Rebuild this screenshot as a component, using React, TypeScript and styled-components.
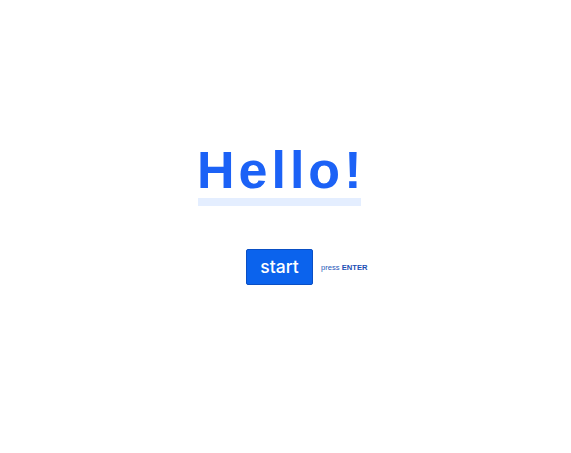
import styled, { createGlobalStyle } from "styled-components";

const GlobalStyle = createGlobalStyle`
  html, body {
    margin: 0;
    padding: 0;
    background: #ffffff;
    font-family: "Liberation Sans", Arial, sans-serif;
  }
`;

const Page = styled.div`
  width: 571px;
  height: 453px;
  padding: 138px 0 0 198px;
  box-sizing: border-box;
`;

const Greeting = styled.div`
  display: inline-flex;
  flex-direction: column;
  align-items: flex-start;
`;

const Title = styled.h1`
  margin: 0 0 0 -1px;
  font-size: 52px;
  line-height: 64px;
  font-weight: 700;
  letter-spacing: 4px;
  color: #1c62f6;
`;

const Underline = styled.div`
  height: 8px;
  width: 163px;
  margin-top: -4px;
  background: #e4eeff;
`;

const Actions = styled.div`
  display: flex;
  align-items: center;
  gap: 8px;
  margin: 43px 0 0 48px;
`;

const StartButton = styled.button`
  width: 67px;
  height: 36px;
  padding: 0 0 2px;
  border: 1px solid #0a4fc4;
  border-radius: 2px;
  background: #0b63ed;
  color: #ffffff;
  font-family: Inter, "Liberation Sans", sans-serif;
  font-weight: 500;
  font-size: 17.5px;
  cursor: pointer;
`;

const Hint = styled.span`
  font-size: 7.6px;
  color: #2456b8;

  b {
    font-weight: 700;
    color: #1b4fb4;
  }
`;

export default function App() {
  return (
    <>
      <GlobalStyle />
      <Page>
        <Greeting>
          <Title>Hello!</Title>
          <Underline />
        </Greeting>
        <Actions>
          <StartButton>start</StartButton>
          <Hint>
            press <b>ENTER</b>
          </Hint>
        </Actions>
      </Page>
    </>
  );
}
